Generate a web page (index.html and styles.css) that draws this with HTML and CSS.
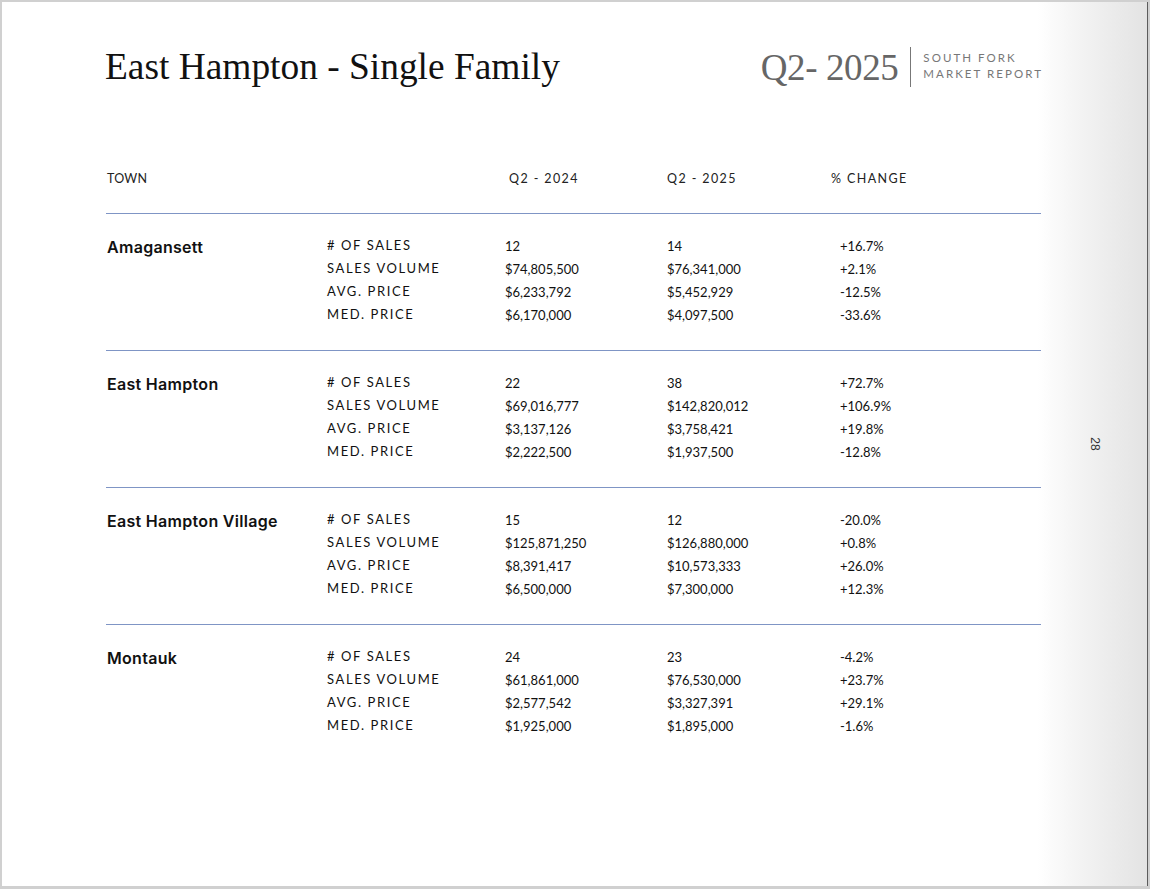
FILE: index.html
```html
<!DOCTYPE html>
<html lang="en">
<head>
<meta charset="utf-8">
<title>East Hampton - Single Family</title>
<link rel="stylesheet" href="styles.css">
</head>
<body>
<div class="page">
  <main class="content">
    <header class="top">
      <h1 class="title">East Hampton - Single Family</h1>
      <div class="brand">
        <span class="quarter">Q2- 2025</span>
        <span class="vline"></span>
        <span class="report">SOUTH FORK<br>MARKET REPORT</span>
      </div>
    </header>

    <div class="thead">
      <span>TOWN</span>
      <span>Q2 - 2024</span>
      <span>Q2 - 2025</span>
      <span>% CHANGE</span>
    </div>

    <section class="group">
      <div class="town">Amagansett</div>
      <div class="rows">
        <div class="row"><span class="lbl"># OF SALES</span><span>12</span><span>14</span><span>+16.7%</span></div>
        <div class="row"><span class="lbl">SALES VOLUME</span><span>$74,805,500</span><span>$76,341,000</span><span>+2.1%</span></div>
        <div class="row"><span class="lbl">AVG. PRICE</span><span>$6,233,792</span><span>$5,452,929</span><span>-12.5%</span></div>
        <div class="row"><span class="lbl">MED. PRICE</span><span>$6,170,000</span><span>$4,097,500</span><span>-33.6%</span></div>
      </div>
    </section>

    <section class="group">
      <div class="town">East Hampton</div>
      <div class="rows">
        <div class="row"><span class="lbl"># OF SALES</span><span>22</span><span>38</span><span>+72.7%</span></div>
        <div class="row"><span class="lbl">SALES VOLUME</span><span>$69,016,777</span><span>$142,820,012</span><span>+106.9%</span></div>
        <div class="row"><span class="lbl">AVG. PRICE</span><span>$3,137,126</span><span>$3,758,421</span><span>+19.8%</span></div>
        <div class="row"><span class="lbl">MED. PRICE</span><span>$2,222,500</span><span>$1,937,500</span><span>-12.8%</span></div>
      </div>
    </section>

    <section class="group">
      <div class="town">East Hampton Village</div>
      <div class="rows">
        <div class="row"><span class="lbl"># OF SALES</span><span>15</span><span>12</span><span>-20.0%</span></div>
        <div class="row"><span class="lbl">SALES VOLUME</span><span>$125,871,250</span><span>$126,880,000</span><span>+0.8%</span></div>
        <div class="row"><span class="lbl">AVG. PRICE</span><span>$8,391,417</span><span>$10,573,333</span><span>+26.0%</span></div>
        <div class="row"><span class="lbl">MED. PRICE</span><span>$6,500,000</span><span>$7,300,000</span><span>+12.3%</span></div>
      </div>
    </section>

    <section class="group last">
      <div class="town">Montauk</div>
      <div class="rows">
        <div class="row"><span class="lbl"># OF SALES</span><span>24</span><span>23</span><span>-4.2%</span></div>
        <div class="row"><span class="lbl">SALES VOLUME</span><span>$61,861,000</span><span>$76,530,000</span><span>+23.7%</span></div>
        <div class="row"><span class="lbl">AVG. PRICE</span><span>$2,577,542</span><span>$3,327,391</span><span>+29.1%</span></div>
        <div class="row"><span class="lbl">MED. PRICE</span><span>$1,925,000</span><span>$1,895,000</span><span>-1.6%</span></div>
      </div>
    </section>
  </main>
  <aside class="side">
    <span class="pagenum">28</span>
  </aside>
</div>
</body>
</html>
```

FILE: styles.css
```css
html, body {
  margin: 0;
  padding: 0;
}
body {
  width: 1150px;
  height: 889px;
  overflow: hidden;
  background: #d0d0d0;
  font-family: "Lato", "Liberation Sans", sans-serif;
  color: #111;
}
.page {
  margin: 2px 0 0 2px;
  width: 1145px;
  height: 884px;
  background: linear-gradient(to right, #ffffff 0, #ffffff 1035px, #f4f4f4 1075px, #e9e9e9 1120px, #e3e3e3 1145px);
  border-right: 1px solid #5c5c5c;
  display: flex;
}
.content {
  width: 935px;
  padding-left: 104px;
}
.top {
  display: flex;
  justify-content: space-between;
  align-items: center;
  height: 128px;
}
.title {
  margin: 0 0 0 -1px;
  font-family: "Liberation Serif", "DejaVu Serif", serif;
  font-weight: 400;
  font-size: 37.4px;
  letter-spacing: 0;
  color: #111;
}
.brand {
  display: flex;
  align-items: center;
  margin-top: 2px;
  margin-right: -2px;
}
.quarter {
  font-family: "Liberation Serif", "DejaVu Serif", serif;
  font-size: 37px;
  color: #666;
  letter-spacing: -0.4px;
}
.vline {
  width: 1px;
  height: 40px;
  background: #777;
  margin: 0 12px 0 12px;
}
.report {
  font-size: 11.5px;
  line-height: 16px;
  letter-spacing: 2.05px;
  color: #777;
  margin-top: -2px;
}
.thead {
  display: grid;
  grid-template-columns: 402px 158px 164px 1fr;
  padding: 41px 0 0 1px;
  height: 42px;
  font-size: 12.5px;
  letter-spacing: 1.4px;
  color: #222;
  border-bottom: 1px solid #7f95c5;
}
.thead span:first-child {
  letter-spacing: 0.2px;
}
.group {
  display: flex;
  padding: 21px 0 23px 0;
  border-bottom: 1px solid #7f95c5;
}
.group.last {
  border-bottom: none;
}
.town {
  width: 220px;
  font-family: "Inter", "Lato", sans-serif;
  font-weight: 600;
  font-size: 16px;
  letter-spacing: 0.3px;
  padding-top: 2px;
  margin-left: 1px;
  color: #111;
}
.rows {
  display: flex;
  flex-direction: column;
}
.row {
  display: grid;
  grid-template-columns: 178px 162px 173px 100px;
  height: 23px;
  line-height: 22px;
  font-size: 13px;
  color: #111;
}
.row span {
  white-space: nowrap;
}
.lbl {
  letter-spacing: 1.6px;
  margin-top: -1px;
}
.side {
  flex: 1;
  display: flex;
  align-items: center;
  justify-content: center;
  padding-left: 2px;
}
.pagenum {
  display: inline-block;
  transform: rotate(90deg);
  font-family: "Liberation Sans", sans-serif;
  font-size: 12px;
  color: #333;
}
```
